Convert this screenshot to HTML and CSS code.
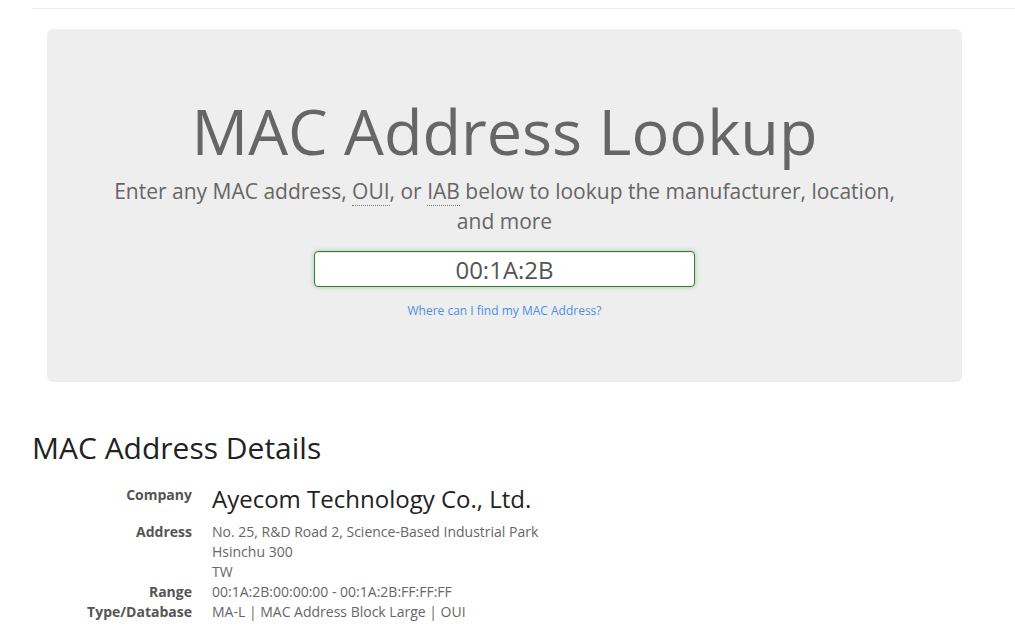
FILE: index.html
```html
<!DOCTYPE html>
<html>
<head>
<meta charset="utf-8">
<link rel="stylesheet" href="styles.css">
<title>MAC Address Lookup</title>
</head>
<body>
<div class="page">
  <div class="rule"></div>
  <section class="jumbotron">
    <h1 class="title">MAC Address Lookup</h1>
    <p class="lead">Enter any MAC address, <abbr title="Organizationally Unique Identifier">OUI</abbr>, or <abbr title="Individual Address Block">IAB</abbr> below to lookup the manufacturer, location, and more</p>
    <div class="search"><input class="mac-input" type="text" value="00:1A:2B"></div>
    <a class="help-link" href="#">Where can I find my MAC Address?</a>
  </section>
  <section class="details">
    <h2 class="details-title">MAC Address Details</h2>
    <dl class="info">
      <dt class="company-label">Company</dt>
      <dd class="company-name">Ayecom Technology Co., Ltd.</dd>
      <dt>Address</dt>
      <dd>No. 25, R&amp;D Road 2, Science-Based Industrial Park<br>Hsinchu 300<br>TW</dd>
      <dt>Range</dt>
      <dd>00:1A:2B:00:00:00 - 00:1A:2B:FF:FF:FF</dd>
      <dt>Type/Database</dt>
      <dd>MA-L | MAC Address Block Large | OUI</dd>
    </dl>
  </section>
</div>
</body>
</html>
```
FILE: styles.css
```css
* { box-sizing: border-box; }
html, body { margin: 0; padding: 0; background: #fff; }
body {
  font-family: "Open Sans", "Liberation Sans", sans-serif;
  font-size: 14px;
  line-height: 20px;
  color: #666;
  overflow: hidden;
}
.page { padding-left: 32px; padding-top: 8px; }
.rule { border-top: 1px solid #eee; margin-bottom: 20px; }
.jumbotron {
  margin-left: 15px;
  width: 915px;
  background: #eee;
  border-radius: 6px;
  padding: 48px 60px 61px;
  text-align: center;
}
.title {
  margin: 19px 0 11px;
  font-size: 63px;
  line-height: 1.1;
  font-weight: 400;
  color: #666;
}
.lead {
  margin: 0 0 15px;
  font-size: 21px;
  line-height: 30px;
  color: #666;
}
abbr {
  text-decoration: none;
  border-bottom: 1px dotted #777;
  cursor: help;
}
.search { display: flex; justify-content: center; }
.mac-input {
  width: 381px;
  height: 36px;
  border: 1px solid #3c763d;
  border-radius: 4px;
  background: #fff;
  box-shadow: inset 0 1px 1px rgba(0,0,0,.075), 0 0 5px #9bd09c;
  font-family: "Open Sans", "Liberation Sans", sans-serif;
  font-size: 24px;
  color: #555;
  text-align: center;
  padding: 0 12px;
  outline: none;
}
.help-link {
  display: inline-block;
  margin-top: 14px;
  font-size: 12px;
  line-height: 20px;
  color: #4a8fe6;
  text-decoration: none;
}
.details { padding-top: 49px; }
.details-title {
  margin: 0 0 22px;
  font-size: 30px;
  line-height: 33px;
  font-weight: 400;
  color: #222;
}
.info {
  display: grid;
  grid-template-columns: 160px 1fr;
  column-gap: 20px;
  margin: 0;
}
.info dt {
  text-align: right;
  font-weight: 700;
  color: #555;
  white-space: nowrap;
}
.info dd { margin: 0; color: #666; }
.info .company-label { line-height: 18px; }
.info .company-name {
  font-size: 24px;
  line-height: 26px;
  color: #222;
  margin-bottom: 10px;
}
```
